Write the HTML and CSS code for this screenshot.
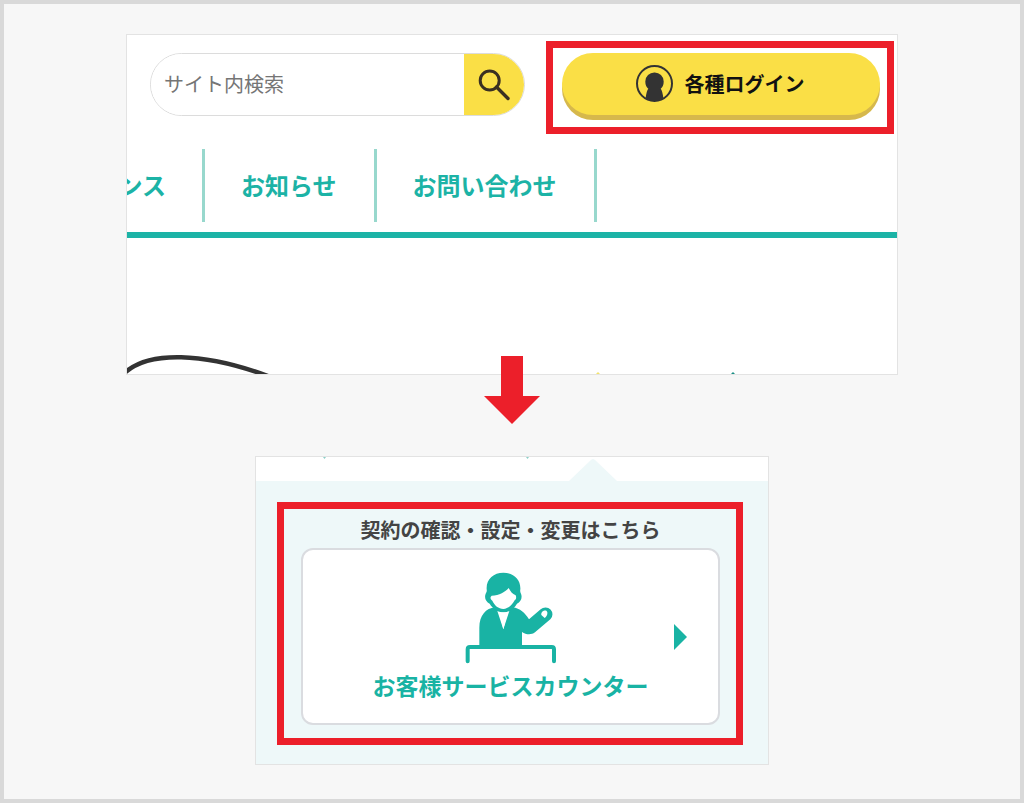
FILE: index.html
```html
<!DOCTYPE html>
<html lang="ja">
<head>
<meta charset="utf-8">
<meta name="viewport" content="width=device-width, initial-scale=1">
<title>各種ログイン</title>
<link rel="stylesheet" href="styles.css">
</head>
<body>
<main class="guide">
  <section class="panel site">
    <header class="site-header">
      <form class="search" role="search">
        <input class="search-input" type="search" placeholder="サイト内検索" aria-label="サイト内検索">
        <button class="search-button" type="button" aria-label="検索">
          <svg width="32" height="32" viewBox="0 0 32 32" fill="none" stroke="#3a3022">
            <circle cx="11.700" cy="11.500" r="9.500" stroke-width="3"/>
            <path d="M18.500 18L30 29.500" stroke-width="3.400" stroke-linecap="round"/>
          </svg>
        </button>
      </form>
      <div class="highlight highlight-login">
        <button class="login" type="button">
          <svg width="37" height="37" viewBox="0 0 37 37" aria-hidden="true">
            <circle cx="18.500" cy="18.500" r="17.500" fill="none" stroke="#333" stroke-width="2"/>
            <path d="M18.500 7.500a9 9 0 0 1 9.200 9c0 3.600-1.300 5.800-3 7.300 1.100 1 2 4.500 2.700 9.400A17.500 17.500 0 0 1 18.500 36a17.500 17.500 0 0 1-8.900-2.800c.7-4.900 1.600-8.400 2.700-9.400-1.700-1.500-3-3.700-3-7.300a9 9 0 0 1 9.200-9z" fill="#333"/>
          </svg>
          <span>各種ログイン</span>
        </button>
      </div>
    </header>
    <nav class="nav">
      <a class="nav-item nav-item-cut" href="#">ンス</a>
      <a class="nav-item" href="#">お知らせ</a>
      <a class="nav-item" href="#">お問い合わせ</a>
    </nav>
    <div class="hero">
      <svg width="770" height="24" viewBox="0 0 770 24" aria-hidden="true">
        <path d="M-2 22.500C22 1 76 2 141 26" fill="none" stroke="#333" stroke-width="4.500"/>
        <path d="M469 24l2-2 2 2z" fill="#f3e36b"/>
        <path d="M604 24l2-2 2 2z" fill="#1b8f85"/>
      </svg>
    </div>
  </section>

  <svg class="step-arrow" width="56" height="68" viewBox="0 0 56 68" aria-hidden="true">
    <path d="M17 0h22v40h17L28 68 0 40h17z" fill="#ec1f2a"/>
  </svg>

  <section class="panel menu">
    <div class="menu-top">
      <svg width="512" height="24" viewBox="0 0 512 24" aria-hidden="true">
        <path d="M313 24l22-21q2-2 4 0l22 21z" fill="#eef8f9"/>
        <path d="M67 0h3l-1.500 2zM270 0h3l-1.500 2z" fill="#8ccfc8"/>
      </svg>
    </div>
    <div class="menu-body">
      <div class="highlight highlight-card">
        <p class="lead">契約の確認・設定・変更はこちら</p>
        <a class="card" href="#">
          <span class="card-main">
            <svg width="92" height="92" viewBox="45 36 276 276" aria-hidden="true">
              <path d="M88 256V203C88 166 108 145 135 142L146 148 160 208 175 148 188 142C211 146 224 158 237 178L272 148A20 20 0 0 1 301 178L255 217C243 226 228 224 216 216V256z" fill="#19b3a4"/>
              <path d="M160 38C190 38 213 58 211 88 210 94 211 96 213 101 218 114 212 125 201 131 191 147 178 157 160 157 142 157 129 147 119 131 108 125 102 114 107 101 110 96 111 94 110 88 108 58 130 38 160 38z" fill="#19b3a4"/>
              <path d="M125 107C148 106 166 96 176 84 181 94 187 102 197 106 200 113 198 118 194 121 186 136 175 146 160 147 145 146 134 137 127 122 120 118 120 110 125 107z" fill="#fff"/>
              <path d="M142 153Q160 162 178 153L160 208z" fill="#fff"/>
              <path d="M274 165C272 157 281 150 289 152 295 157 292 168 284 174z" fill="#fff"/>
              <path d="M53 304V268Q53 261 60 261H305Q312 261 312 268V304" fill="none" stroke="#19b3a4" stroke-width="12" stroke-linecap="round"/>
            </svg>
            <span class="card-title">お客様サービスカウンター</span>
          </span>
          <svg class="card-arrow" width="13" height="26" viewBox="0 0 13 26" aria-hidden="true">
            <path d="M0 0l13 13L0 26z" fill="#19b3a4"/>
          </svg>
        </a>
      </div>
    </div>
  </section>
</main>
</body>
</html>
```
FILE: styles.css
```css
* {
  box-sizing: border-box;
}

body {
  margin: 0;
  background: #f7f7f7;
  font-family: "Noto Sans CJK JP", "Noto Sans", sans-serif;
  color: #333;
}

svg {
  display: block;
  flex: none;
}

.guide {
  min-height: 100vh;
  display: flex;
  flex-direction: column;
  align-items: center;
  padding: 30px 24px;
  border: 4px solid #d9d9d9;
}

.panel {
  width: 100%;
  background: #fff;
  border: 1px solid #e3e3e3;
  overflow: hidden;
}

.highlight {
  border: 7px solid #ec1f2a;
}

/* Site header */

.site {
  max-width: 772px;
}

.site-header {
  display: flex;
  align-items: flex-start;
  gap: 21px;
  padding: 6px 3px 0 23px;
}

.search {
  flex: 0 1 375px;
  min-width: 0;
  height: 63px;
  margin-top: 12px;
  display: flex;
  border: 1px solid #dcdcdc;
  border-radius: 32px;
  overflow: hidden;
}

.search-input {
  flex: 1;
  min-width: 0;
  padding: 0 13px 2px;
  border: 0;
  background: #fff;
  font: inherit;
  font-size: 20px;
}

.search-input::placeholder {
  color: #757575;
}

.search-button {
  width: 60px;
  display: flex;
  align-items: center;
  justify-content: center;
  padding: 0;
  border: 0;
  background: #fadf46;
}

.highlight-login {
  flex: 1;
  padding: 5px 7px 12px 9px;
}

.login {
  width: 100%;
  height: 62px;
  display: flex;
  align-items: center;
  justify-content: center;
  gap: 12px;
  padding: 0 2px 2px 0;
  border: 0;
  border-radius: 31px;
  background: #fadf46;
  box-shadow: 0 5px 0 #d6b84c;
  color: #111;
  font: inherit;
  font-size: 20px;
  font-weight: 700;
  white-space: nowrap;
}

.nav {
  display: flex;
  margin-top: 15px;
  padding-bottom: 10px;
  border-bottom: 6px solid #1cb3a6;
}

.nav-item {
  height: 73px;
  display: flex;
  align-items: center;
  padding: 0 37px 3px 36px;
  border-right: 3px solid #98d8cd;
  color: #1cb3a6;
  font-size: 24px;
  font-weight: 700;
  text-decoration: none;
  white-space: nowrap;
}

.nav-item-cut {
  width: 78px;
  justify-content: flex-end;
  padding-right: 36px;
}

.hero {
  height: 136px;
  display: flex;
  align-items: flex-end;
}

/* Arrow that laps over the lower edge of the first panel */

.step-arrow {
  margin-top: -19px;
  margin-bottom: 32px;
}

/* Login menu */

.menu {
  max-width: 514px;
}

.menu-body {
  padding: 21px 25px 19px 21px;
  background: #eef8f9;
}

.highlight-card {
  padding: 2px 16px 13px 17px;
}

.lead {
  margin: 0;
  font-size: 20px;
  font-weight: 700;
  line-height: 37px;
  text-align: center;
  color: #444;
}

.card {
  display: grid;
  grid-template-columns: 1fr auto 1fr;
  align-items: center;
  padding: 22px 0;
  border: 2px solid #dadce0;
  border-radius: 12px;
  background: #fff;
  color: #19b3a4;
  text-decoration: none;
}

.card-main {
  grid-column: 2;
  display: flex;
  flex-direction: column;
  align-items: center;
  gap: 5px;
}

.card-title {
  font-size: 23px;
  font-weight: 700;
  line-height: 32px;
}

.card-arrow {
  justify-self: end;
  margin-right: 31px;
}
```
